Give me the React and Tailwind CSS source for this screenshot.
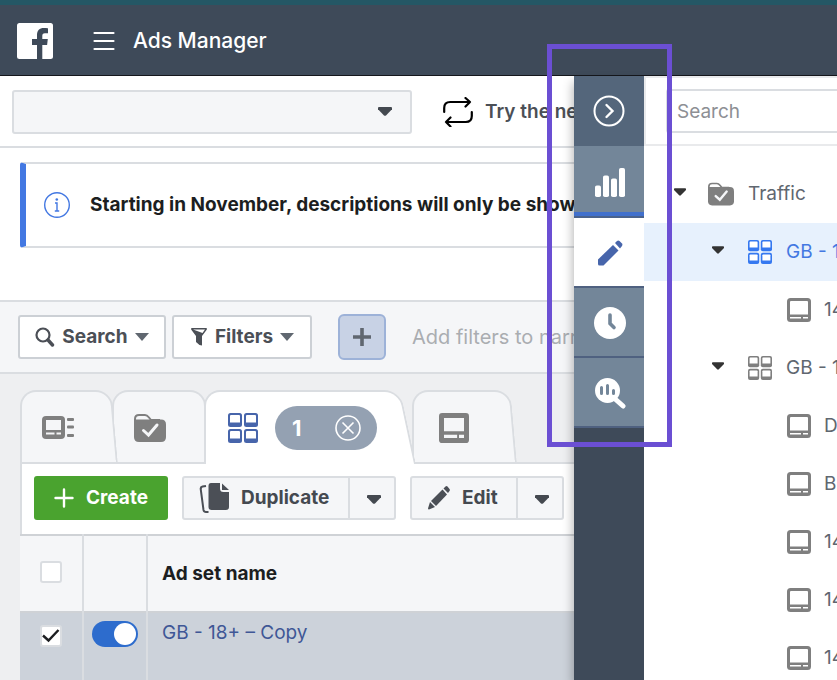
import { useState } from "react";
import clsx from "clsx";

const Caret = ({ className }) => (
  <svg viewBox="0 0 14 9" className={className} fill="currentColor">
    <path d="M1 0h12q1 0 1 1v1.200L8 8.400q-1 .9-2 0L0 2.200V1q0-1 1-1z" />
  </svg>
);

const Triangle = ({ className }) => (
  <svg viewBox="0 0 14 8" className={className} fill="currentColor">
    <path d="M0 0h14L7 8z" />
  </svg>
);

const FacebookLogo = () => (
  <svg viewBox="0 0 36 36" className="size-9">
    <rect width="36" height="36" rx="2.500" fill="#fff" />
    <path
      d="M20 36V22h-5v-6h5v-4c0-4.500 2.600-7 6.700-7 1.800 0 3.400.2 4.300.3v4.900h-3c-2.300 0-2.700 1.200-2.700 2.700V16h5.500l-.7 6h-4.800v14z"
      fill="#3e4a59"
    />
  </svg>
);

const SwapIcon = () => (
  <svg
    viewBox="0 0 30 30"
    className="size-[30px] shrink-0"
    fill="none"
    stroke="#000"
    strokeWidth="2.200"
    strokeLinecap="round"
    strokeLinejoin="round"
  >
    <path d="M1.200 15v-4q0-6 6-6H27M22.500 1l4.500 4-4.500 4.500" />
    <path d="M28.800 15v4q0 6-6 6H3M7.500 20.500L3 25l4.500 4.500" />
  </svg>
);

const InfoIcon = () => (
  <svg viewBox="0 0 26 26" className="size-[26px] shrink-0" fill="none" stroke="#4378e2">
    <circle cx="13" cy="13" r="12.300" strokeWidth="1.400" />
    <path d="M11 11h2v8M10.800 19h4.400" strokeWidth="1.400" />
    <circle cx="12.800" cy="7.500" r="1.300" fill="#4378e2" stroke="none" />
  </svg>
);

const SearchIcon = () => (
  <svg viewBox="0 0 20 20" className="size-5" fill="none" stroke="currentColor">
    <circle cx="8" cy="8" r="6.500" strokeWidth="2.200" />
    <path d="M13 13l4.500 5" strokeWidth="3.400" strokeLinecap="round" />
  </svg>
);

const FunnelIcon = () => (
  <svg viewBox="0 0 18 20" className="h-5 w-[18px]">
    <path
      d="M1.500 1h15q1 .8 0 2L12 9v9.500l-2.500-.5L6 15V9L1.500 3q-1-1.200 0-2z"
      fill="currentColor"
    />
    <path d="M3 2.500h12L12.500 6z" fill="#fff" />
  </svg>
);

// Ad: rounded screen with a small bar under it
const AdIcon = ({ className, thick }) => (
  <svg viewBox="0 0 24 24" className={className}>
    <rect width="24" height="24" rx={thick ? 2.5 : 3.5} fill="currentColor" />
    {thick ? (
      <path d="M4 4h16v10.500H4zM4 17.300h10.500v2.700H4zM16 17.300h4v2.700h-4z" fill="#f5f6f8" />
    ) : (
      <path
        d="M4 3h16q1 0 1 1v12.500H3V4q0-1 1-1zM3 19h11v1.500H3zM16 19h5v1.500h-5z"
        fill="#fff"
      />
    )}
  </svg>
);

const CampaignListIcon = () => (
  <svg viewBox="0 0 32 24" className="h-6 w-8" fill="#7f7f7f">
    <rect width="23" height="23" rx="4" />
    <path d="M4 4h15v10H4zM4 16.500h8.500v2H4zM14.500 16.500H19v2h-4.500z" fill="#f5f6f8" />
    <rect x="25" y="2" width="7" height="3" rx="1" />
    <rect x="25" y="9.500" width="7" height="3" rx="1" />
    <rect x="25" y="18" width="7" height="3" rx="1" />
  </svg>
);

const FolderIcon = ({ className }) => (
  <svg viewBox="0 0 32 28" className={className}>
    <path d="M1 8V5q0-4 4-4h6q2 0 4 2.500l2 2.500h9" fill="none" stroke="#7f7f7f" strokeWidth="2" />
    <path d="M0 5.500h27q5 0 5 5V23q0 5-5 5H5q-5 0-5-5z" fill="#7f7f7f" />
    <path
      d="M9.500 16.500l5 4.500L23 11"
      fill="none"
      stroke="#f5f6f8"
      strokeWidth="3"
      strokeLinecap="round"
    />
  </svg>
);

// Four small screens
const AdSetIcon = ({ className }) => (
  <svg viewBox="0 0 30 30" className={className}>
    {["translate(0 0)", "translate(16 0)", "translate(0 16)", "translate(16 16)"].map((t) => (
      <g key={t} transform={t}>
        <rect width="14" height="14" rx="2.500" fill="currentColor" />
        <path d="M3 2h8q1 0 1 1v6.500H2V3q0-1 1-1z" fill="#fff" />
      </g>
    ))}
  </svg>
);

const DuplicateIcon = () => (
  <svg viewBox="0 0 30 30" className="size-[30px]" fill="#4b4f56">
    <path
      d="M7 3L3.500 3.500q-2 .5-1.800 2.500L4.500 27q.5 2 2.500 2h2.500"
      fill="none"
      stroke="#4b4f56"
      strokeWidth="2"
    />
    <path d="M12 0h9v5.500q0 3.500 3.500 3.500H30v15q0 3-3 3H12.500q-3 0-3-3V3q0-3 2.500-3z" />
    <path d="M23 .5l7 6.500h-7z" />
  </svg>
);

const EditIcon = () => (
  <svg viewBox="0 0 22 24" className="h-6 w-[22px]" fill="#4b4f56">
    <path d="M15.500 2.500l2-2q1-.8 2 0l2 2.500q.8 1 0 2L20 7z" />
    <path d="M14.500 3.500L3 15l5 5L19 8.500z" />
    <path d="M2 16l5 5-6 2.500q-1 0-1-1z" />
  </svg>
);

const railItems = [
  {
    label: "Performance",
    className: "bg-[#738699] h-[72px] border-b-2 border-[#4a628c]",
    marker: true,
    icon: (
      <svg viewBox="0 0 30 29" className="h-[29px] w-[30px]" fill="#fff">
        <rect y="17.500" width="6" height="11.500" rx="1.800" />
        <rect x="8" y="7.500" width="6" height="21.500" rx="1.800" />
        <rect x="16" y="10.500" width="6" height="18.500" rx="1.800" />
        <rect x="24" width="6" height="29" rx="1.800" />
      </svg>
    ),
  },
  {
    label: "Edit",
    className: "bg-white h-[70px] border-b-2 border-[#4f6180]",
    icon: (
      <svg viewBox="0 0 26 26" className="size-[26px]" fill="#4765ab">
        <path d="M18 3l2-2q1.200-1 2.500 0L25 3.500q1 1.200 0 2.500l-2 2.500z" />
        <path d="M16 5L1 19.500V24q0 1.500 1.500 1.500H6.500L21.500 10.500z" />
      </svg>
    ),
  },
  {
    label: "History",
    className: "bg-[#738699] h-[70px] border-b-2 border-[#4f6180]",
    icon: (
      <svg viewBox="0 0 32 32" className="size-8">
        <circle cx="16" cy="16" r="16" fill="#fff" />
        <path
          d="M16 8v8.500l4 4"
          fill="none"
          stroke="#738699"
          strokeWidth="3.600"
          strokeLinecap="round"
        />
      </svg>
    ),
  },
  {
    label: "Inspect",
    className: "bg-[#738699] h-[70px] border-b-2 border-[#4f6180]",
    icon: (
      <svg viewBox="0 0 31 31" className="size-[31px]" strokeLinecap="round">
        <path d="M19 20l9 8" stroke="#fff" strokeWidth="5" />
        <circle cx="12.500" cy="12.500" r="12.500" fill="#fff" />
        <path
          d="M6.500 9.500v6M12.500 7.500v8M18.500 12.500v3"
          stroke="#738699"
          strokeWidth="3"
        />
      </svg>
    ),
  },
];

const treeRows = [
  { type: "adset", name: "GB - 18+", selected: true },
  { type: "ad", name: "14" },
  { type: "adset", name: "GB - 18+" },
  { type: "ad", name: "D" },
  { type: "ad", name: "B" },
  { type: "ad", name: "14" },
  { type: "ad", name: "14" },
  { type: "ad", name: "14" },
];

// Tab with a straight left edge and a slanted right edge
const Tab = ({ className, slant, active, children }) => (
  <div className={clsx("relative h-[74px] shrink-0", className)}>
    <div
      className={clsx(
        "absolute inset-y-0 right-0 left-8 origin-bottom rounded-tr-2xl border-t-2 border-r-2 border-[#dadde1]",
        slant,
        active ? "bg-white" : "border-b-2 bg-[#f5f6f8]"
      )}
    />
    <div
      className={clsx(
        "absolute inset-y-0 left-0 w-14 rounded-tl-2xl border-t-2 border-l-2 border-[#dadde1]",
        active ? "bg-white" : "border-b-2 bg-[#f5f6f8]"
      )}
    />
    <div className="relative flex h-full items-center pt-[2px]">{children}</div>
  </div>
);

const SplitButton = ({ icon, label, className }) => (
  <div className="flex h-11 shrink-0 rounded-[3px] border-2 border-[#dadde1] bg-[#f5f6f8] text-[#444950]">
    <button type="button" className={clsx("flex items-center font-bold", className)}>
      {icon}
      {label}
    </button>
    <button
      type="button"
      aria-label={`${label} options`}
      className="flex flex-1 items-center justify-center border-l-2 border-[#dadde1] pt-[2px] pl-1"
    >
      <Caret className="h-[9px] w-[14px]" />
    </button>
  </div>
);

const Checkbox = ({ label, checked, onChange }) => (
  <label className="relative mx-auto block size-[22px]">
    <input
      type="checkbox"
      aria-label={label}
      checked={checked}
      onChange={onChange}
      className="block size-[22px] appearance-none rounded-[3px] border-2 border-[#dadde1] bg-white"
    />
    {checked && (
      <svg
        viewBox="0 0 22 22"
        className="pointer-events-none absolute inset-0"
        fill="none"
        stroke="#1c1e21"
        strokeWidth="2.400"
      >
        <path d="M3 10.500l5.500 5L18.500 5" />
      </svg>
    )}
  </label>
);

const App = () => {
  const [allChecked, setAllChecked] = useState(false);
  const [rowChecked, setRowChecked] = useState(true);
  const [enabled, setEnabled] = useState(true);

  return (
    <div className="flex h-screen flex-col overflow-hidden bg-white font-['Inter',sans-serif] text-[19px] leading-6 whitespace-nowrap">
      {/* Header */}
      <header className="flex h-[76px] shrink-0 items-center border-t-[5px] border-b border-t-[#245765] border-b-[#15171c] bg-[#3e4a59] pt-[2px] pl-[17px] text-white">
        <FacebookLogo />
        <button type="button" aria-label="Menu" className="mr-[18px] ml-10">
          <svg
            viewBox="0 0 22 20"
            className="h-5 w-[22px]"
            stroke="currentColor"
            strokeWidth="2.200"
            strokeLinecap="round"
          >
            <path d="M1.500 2h19M1.500 10h19M1.500 18h19" />
          </svg>
        </button>
        <h1 className="text-[21px] font-medium">Ads Manager</h1>
      </header>

      <div className="flex min-h-0 flex-1">
        {/* Main column */}
        <main className="flex min-w-0 flex-1 flex-col overflow-hidden bg-[#eeeff1]">
          <div className="flex h-[72px] shrink-0 items-center border-b-2 border-[#dadde1] bg-white pt-[2px] pl-3">
            <div className="relative w-[400px] shrink-0 text-[#444950]">
              <select
                aria-label="Account"
                className="block h-11 w-full appearance-none rounded-[3px] border-2 border-[#dadde1] bg-[#f5f6f8]"
              />
              <Caret className="pointer-events-none absolute top-[17px] right-5 h-[9px] w-[14px]" />
            </div>
            <button
              type="button"
              className="ml-[31px] flex items-center gap-3 font-semibold text-[#4b4f56]"
            >
              <SwapIcon />
              Try the new
            </button>
          </div>

          {/* Notice */}
          <div className="shrink-0 bg-white pt-[14px] pb-[52px] pl-5">
            <div className="flex h-[86px] items-center gap-5 rounded-l-[3px] border-y-2 border-l-6 border-y-[#dadde1] border-l-[#4378e2] pl-[18px]">
              <InfoIcon />
              <p className="font-bold text-[#1c1e21]">
                Starting in November, descriptions will only be shown
              </p>
            </div>
          </div>

          {/* Filters */}
          <div className="flex h-[74px] shrink-0 items-center border-y-2 border-[#dadde1] bg-[#f5f6f8] pl-[18px] text-[#4b4f56]">
            <button
              type="button"
              className="flex h-11 w-[148px] shrink-0 items-center justify-center gap-[7px] rounded-[3px] border-2 border-[#ccd0d5] bg-white font-bold"
            >
              <SearchIcon />
              Search
              <Triangle className="h-2 w-[14px] text-[#606770]" />
            </button>
            <button
              type="button"
              className="ml-[6px] flex h-11 w-[140px] shrink-0 items-center justify-center gap-[7px] rounded-[3px] border-2 border-[#ccd0d5] bg-white font-bold"
            >
              <FunnelIcon />
              Filters
              <Triangle className="h-2 w-[14px] text-[#606770]" />
            </button>
            <button
              type="button"
              aria-label="Add filter"
              className="ml-[26px] flex h-[46px] w-12 shrink-0 items-center justify-center rounded-[6px] border-2 border-[#9db2d8] bg-[#c8d2e5]"
            >
              <svg viewBox="0 0 18 18" className="size-[18px]" stroke="#606770" strokeWidth="3.600">
                <path d="M9 0v18M0 9h18" />
              </svg>
            </button>
            <input
              type="text"
              aria-label="Add filters"
              placeholder="Add filters to narrow"
              className="ml-[26px] min-w-0 flex-1 bg-transparent text-[20px] placeholder:text-[#aaadb1] focus:outline-none"
            />
          </div>

          {/* Tabs */}
          <div className="mt-4 ml-5 flex shrink-0">
            <Tab className="z-20 w-[98px] pl-[22px]" slant="skew-x-[5deg]">
              <button type="button" aria-label="Account overview">
                <CampaignListIcon />
              </button>
            </Tab>
            <Tab className="z-10 -ml-[6px] w-[94px] pl-[22px]" slant="">
              <button type="button" aria-label="Campaigns">
                <FolderIcon className="h-7 w-8" />
              </button>
            </Tab>
            <Tab className="z-20 -ml-[2px] w-[212px] pl-6" slant="skew-x-[12deg]" active>
              <button type="button" aria-label="Ad sets" className="text-[#4765ab]">
                <AdSetIcon className="size-[30px]" />
              </button>
              <span className="ml-[17px] flex h-11 w-[102px] shrink-0 items-center justify-between rounded-full bg-[#94a1b2] pr-4 pl-[17px] text-[22px] font-bold text-white">
                1
                <button type="button" aria-label="Clear selection">
                  <svg viewBox="0 0 26 26" className="size-[26px]" fill="none" stroke="#fff">
                    <circle cx="13" cy="13" r="12" strokeWidth="1.600" />
                    <path d="M7.500 7.500l11 11M18.500 7.500l-11 11" strokeWidth="1.600" />
                  </svg>
                </button>
              </span>
            </Tab>
            <Tab className="z-10 -ml-1 w-[105px] pl-[27px]" slant="skew-x-[5deg]">
              <button type="button" aria-label="Ads" className="text-[#7f7f7f]">
                <AdIcon className="size-[30px]" thick />
              </button>
            </Tab>
            <div className="flex-1 border-b-2 border-[#dadde1]" />
          </div>

          {/* Toolbar */}
          <div className="ml-5 flex h-[70px] shrink-0 items-start gap-[14px] border-l-2 border-[#dadde1] bg-white pt-3 pl-3">
            <button
              type="button"
              className="flex h-11 w-[134px] shrink-0 items-center justify-center gap-3 rounded-[3px] bg-[#4aa32f] font-bold text-white"
            >
              <svg
                viewBox="0 0 20 20"
                className="size-5"
                stroke="#fff"
                strokeWidth="2.400"
                strokeLinecap="round"
              >
                <path d="M10 1.500v17M1.500 10h17" />
              </svg>
              Create
            </button>
            <div className="grid w-[214px] shrink-0">
              <SplitButton
                icon={<DuplicateIcon />}
                label="Duplicate"
                className="w-[164px] gap-3 pl-[15px]"
              />
            </div>
            <div className="grid w-[154px] shrink-0">
              <SplitButton icon={<EditIcon />} label="Edit" className="w-[104px] gap-3 pl-4" />
            </div>
          </div>

          {/* Ad set table */}
          <div className="ml-5">
            <table className="w-full table-fixed border-collapse text-left">
              <colgroup>
                <col className="w-[63px]" />
                <col className="w-16" />
                <col />
              </colgroup>
              <thead>
                <tr className="h-[77px] border-y-2 border-[#cfd2d6] bg-[#f5f6f8]">
                  <th className="border-r-2 border-[#dadde1] pb-1">
                    <Checkbox
                      label="Select all"
                      checked={allChecked}
                      onChange={() => setAllChecked(!allChecked)}
                    />
                  </th>
                  <th className="border-r-2 border-[#dadde1]" aria-label="Status" />
                  <th className="pl-[14px] font-bold text-[#1c1e21]">Ad set name</th>
                </tr>
              </thead>
              <tbody>
                <tr className="h-[69px] bg-[#ccd2da] align-top">
                  <td className="border-r-2 border-[#dadde1] pt-3">
                    <Checkbox
                      label="Select GB - 18+ – Copy"
                      checked={rowChecked}
                      onChange={() => setRowChecked(!rowChecked)}
                    />
                  </td>
                  <td className="border-r-2 border-[#dadde1] pt-2">
                    <input
                      type="checkbox"
                      role="switch"
                      aria-label="Ad set on"
                      checked={enabled}
                      onChange={() => setEnabled(!enabled)}
                      className="mx-auto flex h-[26px] w-[46px] appearance-none items-center rounded-full bg-[#8d949e] px-[2px] before:size-[22px] before:rounded-full before:bg-white checked:justify-end checked:bg-[#2d6ccd]"
                    />
                  </td>
                  <td className="pt-2 pl-[14px]">
                    <a href="#adset" className="text-[#3f5796]">
                      GB - 18+ – Copy
                    </a>
                  </td>
                </tr>
              </tbody>
            </table>
          </div>
        </main>

        {/* Side drawer */}
        <aside className="relative flex w-[263px] shrink-0 bg-white shadow-[-1px_6px_10px_rgba(0,0,0,0.3)]">
          <nav className="relative w-[70px] shrink-0 bg-[#3e4a59]">
            <button
              type="button"
              aria-label="Collapse"
              className="flex h-[70px] w-full items-center justify-center bg-[#54667b]"
            >
              <svg viewBox="0 0 32 32" className="size-8" fill="none" stroke="#fff" strokeWidth="2">
                <circle cx="16" cy="16" r="14.500" />
                <path d="M13.500 10l6 6-6 6" strokeWidth="2.400" strokeLinecap="round" />
              </svg>
            </button>
            {railItems.map((item) => (
              <button
                key={item.label}
                type="button"
                aria-label={item.label}
                className={clsx("block w-full", item.className)}
              >
                <span
                  className={clsx(
                    "flex h-full items-center justify-center pt-[2px] pl-[2px]",
                    item.marker && "border-b-4 border-[#4170cc] pt-[6px]"
                  )}
                >
                  {item.icon}
                </span>
              </button>
            ))}
            {/* Highlight frame around the rail */}
            <div className="pointer-events-none absolute -top-8 -right-7 -left-[27px] z-10 h-[403px] border-5 border-[#6b4fd3]" />
          </nav>

          <div className="min-w-0 flex-1 overflow-hidden text-[#606770]">
            <div className="flex h-[70px] items-center border-y-2 border-l-2 border-[#e9eaec] pl-5">
              <input
                type="search"
                aria-label="Search"
                placeholder="Search"
                className="h-11 w-full rounded-l-[3px] border-2 border-r-0 border-[#dadde1] pl-[9px] placeholder:text-[#8d8f94] focus:outline-none"
              />
            </div>
            <ul className="pt-[19px]">
              <li className="flex h-[58px] items-center pl-[30px]">
                <Caret className="mr-[22px] mb-1 h-2 w-3 shrink-0 text-[#333]" />
                <FolderIcon className="mr-[14px] h-6 w-[26px] shrink-0" />
                Traffic
              </li>
              {treeRows.map((row, i) =>
                row.type === "adset" ? (
                  <li
                    key={i}
                    className={clsx(
                      "flex h-[58px] items-center pl-[68px]",
                      row.selected && "bg-[#e7f1fd] text-[#4378e2]"
                    )}
                  >
                    <Caret className="mr-6 mb-1 h-2 w-3 shrink-0 text-[#333]" />
                    <AdSetIcon
                      className={clsx(
                        "mr-[14px] size-6 shrink-0",
                        row.selected ? "text-[#3578f0]" : "text-[#7f7f7f]"
                      )}
                    />
                    {row.name}
                  </li>
                ) : (
                  <li key={i} className="flex h-[58px] items-center pl-[143px]">
                    <AdIcon className="mr-[13px] size-6 shrink-0 text-[#7f7f7f]" />
                    {row.name}
                  </li>
                )
              )}
            </ul>
          </div>
        </aside>
      </div>
    </div>
  );
};

export default App;
